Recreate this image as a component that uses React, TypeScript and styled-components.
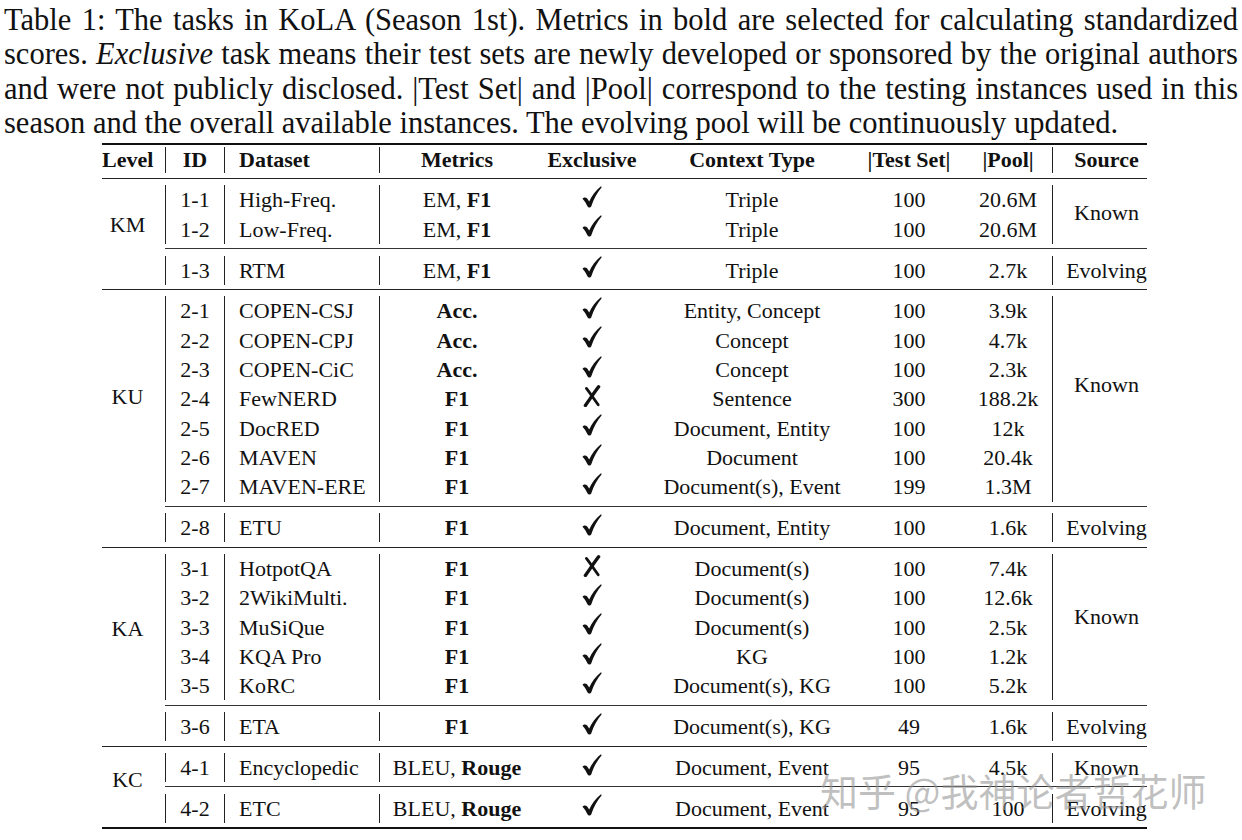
import React from "react";
import styled, { createGlobalStyle } from "styled-components";

const GlobalStyle = createGlobalStyle`
  html, body { margin: 0; padding: 0; background: #ffffff; }
  body { font-family: "Liberation Serif", "Times New Roman", serif; color: #111; }
`;

const COLS = "59px 155px 155px 116px 204px 110px 88px 95px";
const RH = 29.3;

const Page = styled.div`
  position: relative;
  width: 1242px;
  height: 840px;
  overflow: hidden;
  background: #fff;
`;

const Caption = styled.div`
  padding: 3px 4px 0 4px;
  font-size: 30.5px;
  line-height: 34.4px;
  color: #111;
`;

const CaptionLine = styled.div<{ $last?: boolean }>`
  white-space: nowrap;
  text-align: ${(p) => (p.$last ? "left" : "justify")};
  text-align-last: ${(p) => (p.$last ? "left" : "justify")};
`;

const Table = styled.div`
  margin: 2.4px 0 0 102px;
  width: 1045px;
  font-size: 22px;
  border-top: 2px solid #111;
  border-bottom: 2px solid #111;
`;

const HeadRow = styled.div`
  display: grid;
  grid-template-columns: 63px ${COLS};
  padding: 2px 0 5px;
  line-height: 26px;
  font-weight: bold;
  border-bottom: 1px solid #222;
`;

const HeadCell = styled.div<{ $line?: boolean; $align?: string; $pl?: number; $pr?: number }>`
  text-align: ${(p) => p.$align || "center"};
  padding-left: ${(p) => p.$pl || 0}px;
  padding-right: ${(p) => p.$pr || 0}px;
  border-left: ${(p) => (p.$line ? "1px solid #222" : "none")};
  white-space: nowrap;
`;

const Block = styled.div<{ $ruled?: boolean }>`
  display: flex;
  border-top: ${(p) => (p.$ruled ? "1px solid #222" : "none")};
`;

const LevelCell = styled.div<{ $top: number }>`
  width: 63px;
  flex: none;
  box-sizing: border-box;
  padding: ${(p) => p.$top}px 12px 0 0;
  text-align: center;
  line-height: ${RH}px;
`;

const Groups = styled.div`
  flex: 1;
  display: flex;
  flex-direction: column;
`;

const Group = styled.div<{ $ruled?: boolean }>`
  display: grid;
  grid-template-columns: ${COLS};
  grid-auto-rows: ${RH}px;
  padding: 6.4px 0 4.2px;
  border-top: ${(p) => (p.$ruled ? "1px solid #333" : "none")};
`;

const Cell = styled.div<{ $line?: boolean; $left?: boolean }>`
  display: flex;
  align-items: center;
  justify-content: ${(p) => (p.$left ? "flex-start" : "center")};
  padding-left: ${(p) => (p.$left ? 14 : 0)}px;
  border-left: ${(p) => (p.$line ? "1px solid #222" : "none")};
  white-space: nowrap;
  line-height: ${RH}px;
`;

const SourceCell = styled.div<{ $span: number; $top: number }>`
  grid-column: 8;
  grid-row: span ${(p) => p.$span};
  border-left: 1px solid #222;
  padding: ${(p) => p.$top}px 0 0 13px;
  text-align: center;
  line-height: ${RH}px;
`;

const Mark = styled.svg`
  margin-bottom: 6px;
  display: block;
`;

const Watermark = styled.div`
  position: absolute;
  left: 820px;
  top: 765px;
  font-family: "Noto Sans CJK SC", "Noto Sans", sans-serif;
  font-size: 38px;
  line-height: 50px;
  color: rgba(150, 150, 150, 0.6);
  white-space: nowrap;
  pointer-events: none;
`;

const Check = () => (
  <Mark width="20" height="22" viewBox="0 0 20 22">
    <path
      d="M0.5 12.8 C1.6 11.2 3.8 10.8 5.2 12.6 L7.2 15.4 C9.8 9.8 13.8 4.6 18.6 0.6 C19.2 0.2 19.9 0.7 19.5 1.4 C15.4 6.4 11.6 13 9.3 20.2 C8.8 21.6 6.4 22 5.6 20.6 C4.2 17.8 2.6 14.8 0.5 12.8 Z"
      fill="#111"
    />
  </Mark>
);

const Cross = () => (
  <Mark width="20" height="22" viewBox="0 0 20 22">
    <path d="M16.6 1.8 C12.6 7 8.2 13.6 3.4 20.4" stroke="#111" strokeWidth="3.4" strokeLinecap="round" fill="none" />
    <path d="M4.4 3.4 C8 8 11.6 13.4 16.2 19.8" stroke="#111" strokeWidth="2.8" strokeLinecap="round" fill="none" />
  </Mark>
);

type Metric = "emf1" | "acc" | "f1" | "bleu";
type Row = [string, string, Metric, boolean, string, string, string];
type GroupData = { rows: Row[]; source: string; sourceTop: number };
type BlockData = { level: string; levelTop: number; groups: GroupData[] };

const renderMetric = (m: Metric) => {
  switch (m) {
    case "emf1":
      return (
        <span>
          EM, <b>F1</b>
        </span>
      );
    case "acc":
      return <b>Acc.</b>;
    case "f1":
      return <b>F1</b>;
    default:
      return (
        <span>
          BLEU, <b>Rouge</b>
        </span>
      );
  }
};

const blocks: BlockData[] = [
  {
    level: "KM",
    levelTop: 31.4,
    groups: [
      {
        rows: [
          ["1-1", "High-Freq.", "emf1", true, "Triple", "100", "20.6M"],
          ["1-2", "Low-Freq.", "emf1", true, "Triple", "100", "20.6M"],
        ],
        source: "Known",
        sourceTop: 13,
      },
      { rows: [["1-3", "RTM", "emf1", true, "Triple", "100", "2.7k"]], source: "Evolving", sourceTop: 0 },
    ],
  },
  {
    level: "KU",
    levelTop: 92,
    groups: [
      {
        rows: [
          ["2-1", "COPEN-CSJ", "acc", true, "Entity, Concept", "100", "3.9k"],
          ["2-2", "COPEN-CPJ", "acc", true, "Concept", "100", "4.7k"],
          ["2-3", "COPEN-CiC", "acc", true, "Concept", "100", "2.3k"],
          ["2-4", "FewNERD", "f1", false, "Sentence", "300", "188.2k"],
          ["2-5", "DocRED", "f1", true, "Document, Entity", "100", "12k"],
          ["2-6", "MAVEN", "f1", true, "Document", "100", "20.4k"],
          ["2-7", "MAVEN-ERE", "f1", true, "Document(s), Event", "199", "1.3M"],
        ],
        source: "Known",
        sourceTop: 73.5,
      },
      { rows: [["2-8", "ETU", "f1", true, "Document, Entity", "100", "1.6k"]], source: "Evolving", sourceTop: 0 },
    ],
  },
  {
    level: "KA",
    levelTop: 66.5,
    groups: [
      {
        rows: [
          ["3-1", "HotpotQA", "f1", false, "Document(s)", "100", "7.4k"],
          ["3-2", "2WikiMulti.", "f1", true, "Document(s)", "100", "12.6k"],
          ["3-3", "MuSiQue", "f1", true, "Document(s)", "100", "2.5k"],
          ["3-4", "KQA Pro", "f1", true, "KG", "100", "1.2k"],
          ["3-5", "KoRC", "f1", true, "Document(s), KG", "100", "5.2k"],
        ],
        source: "Known",
        sourceTop: 48,
      },
      { rows: [["3-6", "ETA", "f1", true, "Document(s), KG", "49", "1.6k"]], source: "Evolving", sourceTop: 0 },
    ],
  },
  {
    level: "KC",
    levelTop: 18,
    groups: [
      { rows: [["4-1", "Encyclopedic", "bleu", true, "Document, Event", "95", "4.5k"]], source: "Known", sourceTop: 0 },
      { rows: [["4-2", "ETC", "bleu", true, "Document, Event", "95", "100"]], source: "Evolving", sourceTop: 0 },
    ],
  },
];

const GroupView = ({ g, ruled }: { g: GroupData; ruled: boolean }) => (
  <Group $ruled={ruled}>
    {g.rows.map((r, i) => (
      <React.Fragment key={r[0]}>
        <Cell $line>{r[0]}</Cell>
        <Cell $line $left>
          {r[1]}
        </Cell>
        <Cell $line>{renderMetric(r[2])}</Cell>
        <Cell>{r[3] ? <Check /> : <Cross />}</Cell>
        <Cell>{r[4]}</Cell>
        <Cell>{r[5]}</Cell>
        <Cell>{r[6]}</Cell>
        {i === 0 && (
          <SourceCell $span={g.rows.length} $top={g.sourceTop}>
            {g.source}
          </SourceCell>
        )}
      </React.Fragment>
    ))}
  </Group>
);

export default function App() {
  return (
    <Page>
      <GlobalStyle />
      <Caption>
        <CaptionLine>
          Table 1: The tasks in KoLA (Season 1st). Metrics in bold are selected for calculating standardized
        </CaptionLine>
        <CaptionLine>
          scores. <i>Exclusive</i> task means their test sets are newly developed or sponsored by the original authors
        </CaptionLine>
        <CaptionLine>
          and were not publicly disclosed. |Test Set| and |Pool| correspond to the testing instances used in this
        </CaptionLine>
        <CaptionLine $last>
          season and the overall available instances. The evolving pool will be continuously updated.
        </CaptionLine>
      </Caption>
      <Table>
        <HeadRow>
          <HeadCell $pr={12}>Level</HeadCell>
          <HeadCell $line>ID</HeadCell>
          <HeadCell $line $align="left" $pl={14}>
            Dataset
          </HeadCell>
          <HeadCell $line>Metrics</HeadCell>
          <HeadCell>Exclusive</HeadCell>
          <HeadCell>Context Type</HeadCell>
          <HeadCell>|Test Set|</HeadCell>
          <HeadCell>|Pool|</HeadCell>
          <HeadCell $line $pl={13}>
            Source
          </HeadCell>
        </HeadRow>
        {blocks.map((b, bi) => (
          <Block key={b.level} $ruled={bi > 0}>
            <LevelCell $top={b.levelTop}>{b.level}</LevelCell>
            <Groups>
              {b.groups.map((g, gi) => (
                <GroupView key={gi} g={g} ruled={gi > 0} />
              ))}
            </Groups>
          </Block>
        ))}
      </Table>
      <Watermark>知乎 @我神论者哲花师</Watermark>
    </Page>
  );
}
